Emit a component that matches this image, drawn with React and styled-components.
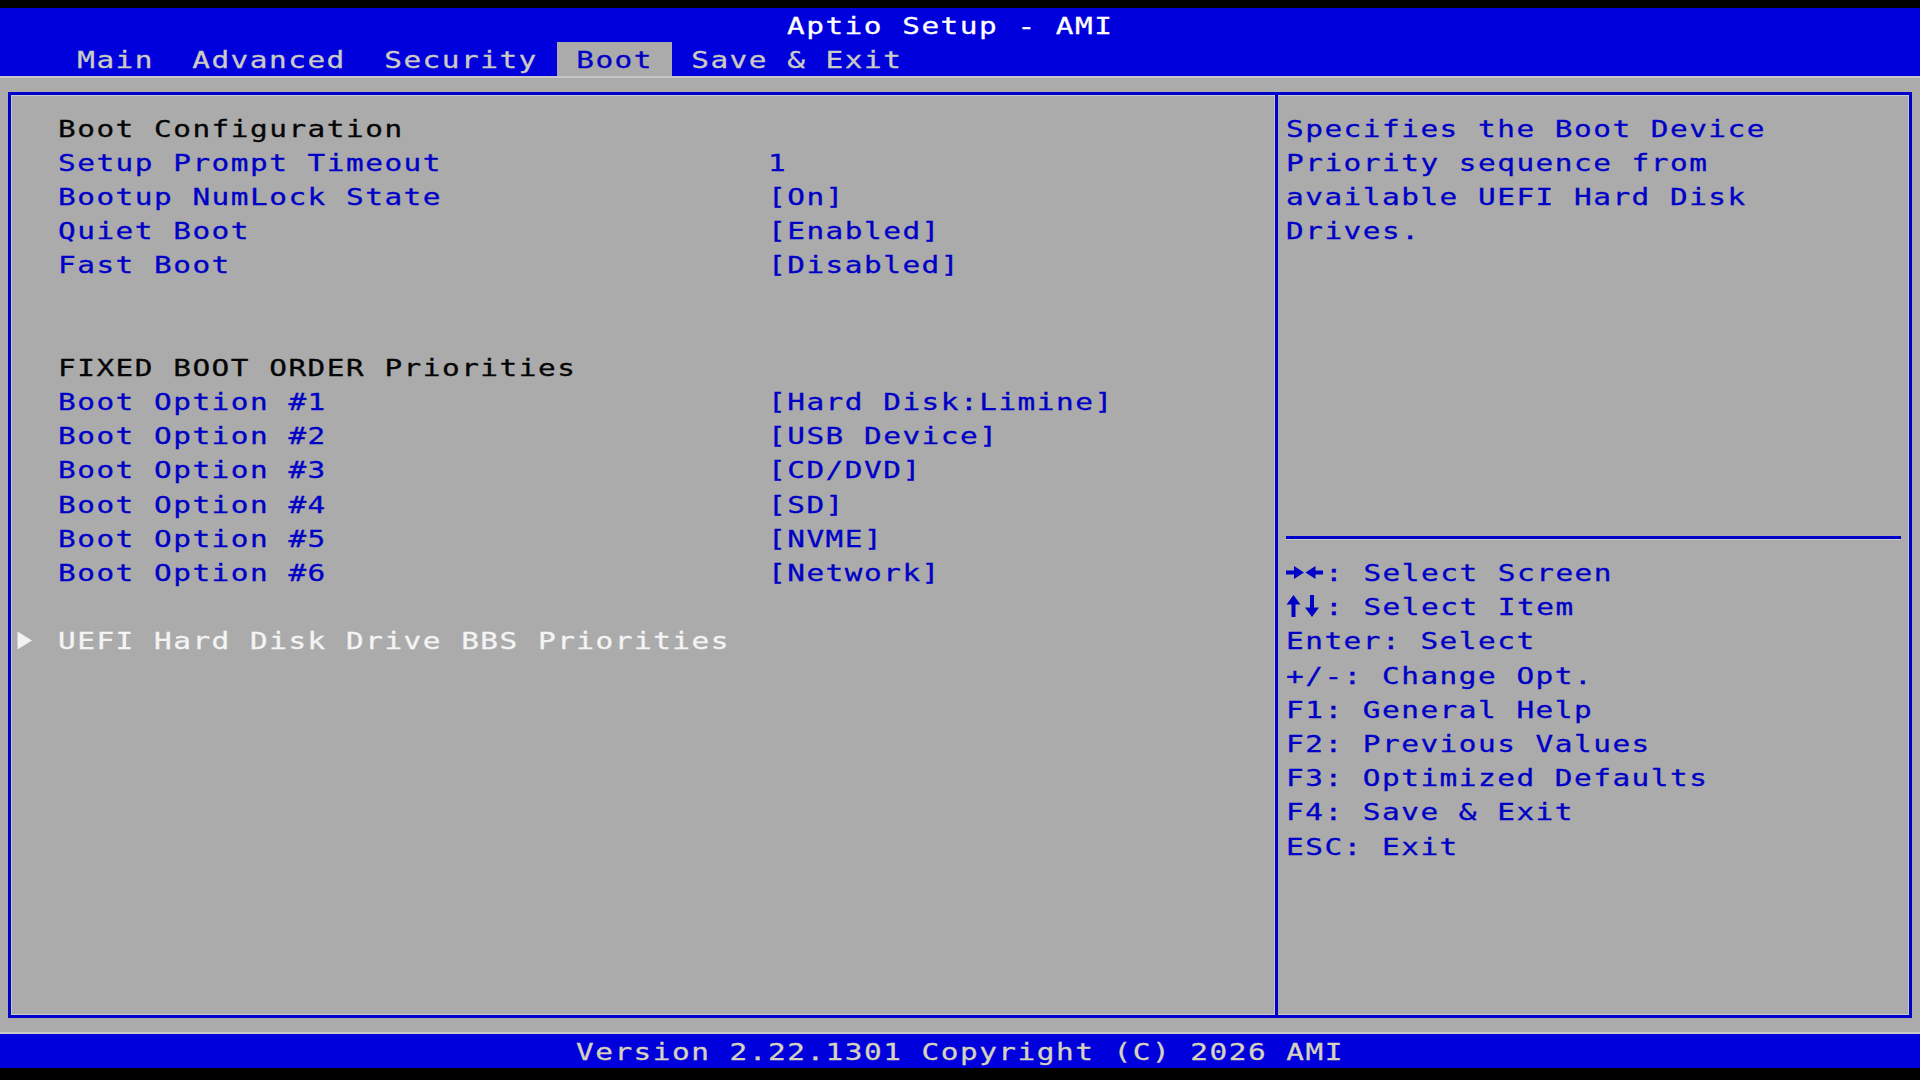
import React from 'react';
import styled, { createGlobalStyle } from 'styled-components';

const CW = 19.2;
const RH = 1060 / 31;
const K = 1.25;
const FS = 23.5;
const ADV = 0.6021 * FS;
const LS = CW / K - ADV;

const C = {
  blue: '#0000dc',
  line: '#0000cc',
  ink: '#0000c6',
  gray: '#ababab',
  hl: '#c8c8c8',
  white: '#ffffff',
  dim: '#cbcbc3',
  foot: '#d6d2bc',
  black: '#050505',
};

const GlobalStyle = createGlobalStyle`
  html, body { margin: 0; padding: 0; background: #000; }
  body {
    width: 1920px;
    height: 1080px;
    overflow: hidden;
    font-family: "DejaVu Sans Mono", "Liberation Mono", monospace;
  }
`;

const Screen = styled.div`
  width: 1920px;
  height: 1080px;
  box-sizing: border-box;
  padding-top: 8px;
  background: #000;
  display: flex;
  flex-direction: column;
`;

const Glyphs = styled.span`
  display: inline-block;
  vertical-align: top;
  width: ${(p) => p.$n * CW}px;
  white-space: pre;
  font-size: ${FS}px;
  line-height: ${RH + 3}px;
  letter-spacing: ${LS}px;
  transform: scaleX(${K});
  transform-origin: 0 50%;
  -webkit-text-stroke: 0.3px currentColor;
`;

const T = ({ children }) => {
  const s = String(children);
  return <Glyphs $n={s.length}>{s}</Glyphs>;
};

const Header = styled.header`
  background: ${C.blue};
  display: flex;
  flex-direction: column;
`;

const TitleRow = styled.div`
  height: ${RH}px;
  padding-left: ${41 * CW}px;
  color: ${C.white};
`;

const TabRow = styled.nav`
  height: ${RH}px;
  padding-left: ${3 * CW}px;
  display: flex;
  color: ${C.dim};
`;

const Tab = styled.div`
  height: ${RH}px;
  background: ${(p) => (p.$active ? C.gray : 'transparent')};
  color: ${(p) => (p.$active ? C.ink : C.dim)};
`;

const Body = styled.main`
  height: ${28 * RH}px;
  box-sizing: border-box;
  background: ${C.gray};
  padding: ${RH / 2 - 1.5}px ${CW / 2 - 1.5}px;
  display: flex;
  box-shadow: inset 0 2px 0 ${C.hl}, inset 0 -2px 0 ${C.hl};
`;

const Frame = styled.section`
  flex: 1;
  border: 3px solid ${C.line};
  display: grid;
  grid-template-columns: ${66 * CW - 3}px 1fr;
  box-shadow: inset 0 0 0 1px ${C.hl};
`;

const MainPanel = styled.div`
  padding: ${RH / 2 - 1.5}px 0 0 ${CW / 2 - 1.5}px;
  display: flex;
  flex-direction: column;
`;

const Row = styled.div`
  height: ${RH}px;
  display: grid;
  grid-template-columns: ${2 * CW}px ${37 * CW}px 1fr;
  color: ${(p) => p.$color};
`;

const Marker = styled.svg`
  display: block;
  width: ${2 * CW}px;
  height: ${RH}px;
  overflow: visible;
`;

const HelpPanel = styled.aside`
  border-left: 3px solid ${C.line};
  box-shadow: -1px 0 0 ${C.hl};
  padding: ${RH / 2 - 1.5}px ${CW / 2 - 1.5}px 0;
  display: flex;
  flex-direction: column;
  color: ${C.ink};
`;

const HelpBlock = styled.div`
  height: ${12 * RH}px;
  display: flex;
  flex-direction: column;
`;

const HelpLine = styled.div`
  height: ${RH}px;
`;

const Separator = styled.div`
  height: ${RH}px;
  display: flex;
  align-items: center;
  &::before {
    content: '';
    flex: 1;
    height: 3px;
    background: ${C.line};
    box-shadow: 0 1px 0 ${C.hl};
  }
`;

const KeyRow = styled.div`
  height: ${RH}px;
  display: flex;
`;

const KeyIcon = styled.svg`
  display: block;
  flex: none;
  width: ${2 * CW}px;
  height: ${RH}px;
  fill: ${C.ink};
`;

const Footer = styled.footer`
  height: ${RH}px;
  background: ${C.blue};
  padding-left: ${30 * CW}px;
  color: ${C.foot};
`;

const LeftRightIcon = () => (
  <KeyIcon viewBox={`0 0 ${2 * CW} ${RH}`}>
    <rect x="0" y="15.5" width="9" height="4" />
    <polygon points="8,11 18,17.5 8,24" />
    <polygon points="19.5,17.5 29.5,11 29.5,24" />
    <rect x="28.5" y="15.5" width="8.5" height="4" />
  </KeyIcon>
);

const UpDownIcon = () => (
  <KeyIcon viewBox={`0 0 ${2 * CW} ${RH}`}>
    <polygon points="0.5,15.5 7.5,6 14.5,15.5" />
    <rect x="5.5" y="14" width="4" height="14" />
    <rect x="24" y="6" width="4" height="14" />
    <polygon points="19,18.5 26,28 33,18.5" />
  </KeyIcon>
);

const SubmenuArrow = () => (
  <Marker viewBox={`0 0 ${2 * CW} ${RH}`}>
    <polygon points="-1.5,8.5 13,17.5 -1.5,26.5" fill="#f2f2f2" />
  </Marker>
);

const tabs = ['Main', 'Advanced', 'Security', 'Boot', 'Save & Exit'];

const items = [
  { label: 'Boot Configuration', color: C.black },
  { label: 'Setup Prompt Timeout', value: '1', color: C.ink },
  { label: 'Bootup NumLock State', value: '[On]', color: C.ink },
  { label: 'Quiet Boot', value: '[Enabled]', color: C.ink },
  { label: 'Fast Boot', value: '[Disabled]', color: C.ink },
  { label: '' },
  { label: '' },
  { label: 'FIXED BOOT ORDER Priorities', color: C.black },
  { label: 'Boot Option #1', value: '[Hard Disk:Limine]', color: C.ink },
  { label: 'Boot Option #2', value: '[USB Device]', color: C.ink },
  { label: 'Boot Option #3', value: '[CD/DVD]', color: C.ink },
  { label: 'Boot Option #4', value: '[SD]', color: C.ink },
  { label: 'Boot Option #5', value: '[NVME]', color: C.ink },
  { label: 'Boot Option #6', value: '[Network]', color: C.ink },
  { label: '' },
  { label: 'UEFI Hard Disk Drive BBS Priorities', color: '#f4f4f4', submenu: true },
];

const helpText = [
  'Specifies the Boot Device',
  'Priority sequence from',
  'available UEFI Hard Disk',
  'Drives.',
];

const keys = [
  { icon: <LeftRightIcon />, text: ': Select Screen' },
  { icon: <UpDownIcon />, text: ': Select Item' },
  { text: 'Enter: Select' },
  { text: '+/-: Change Opt.' },
  { text: 'F1: General Help' },
  { text: 'F2: Previous Values' },
  { text: 'F3: Optimized Defaults' },
  { text: 'F4: Save & Exit' },
  { text: 'ESC: Exit' },
];

export default function App() {
  return (
    <>
      <GlobalStyle />
      <Screen>
        <Header>
          <TitleRow>
            <T>Aptio Setup - AMI</T>
          </TitleRow>
          <TabRow>
            {tabs.map((t) => (
              <Tab key={t} $active={t === 'Boot'}>
                <T>{` ${t} `}</T>
              </Tab>
            ))}
          </TabRow>
        </Header>
        <Body>
          <Frame>
            <MainPanel>
              {items.map((it, i) => (
                <Row key={i} $color={it.color}>
                  {it.submenu ? <SubmenuArrow /> : <span />}
                  <div>{it.label && <T>{it.label}</T>}</div>
                  <div>{it.value && <T>{it.value}</T>}</div>
                </Row>
              ))}
            </MainPanel>
            <HelpPanel>
              <HelpBlock>
                {helpText.map((l) => (
                  <HelpLine key={l}>
                    <T>{l}</T>
                  </HelpLine>
                ))}
              </HelpBlock>
              <Separator />
              {keys.map((k) => (
                <KeyRow key={k.text}>
                  {k.icon}
                  <T>{k.text}</T>
                </KeyRow>
              ))}
            </HelpPanel>
          </Frame>
        </Body>
        <Footer>
          <T>Version 2.22.1301 Copyright (C) 2026 AMI</T>
        </Footer>
      </Screen>
    </>
  );
}
